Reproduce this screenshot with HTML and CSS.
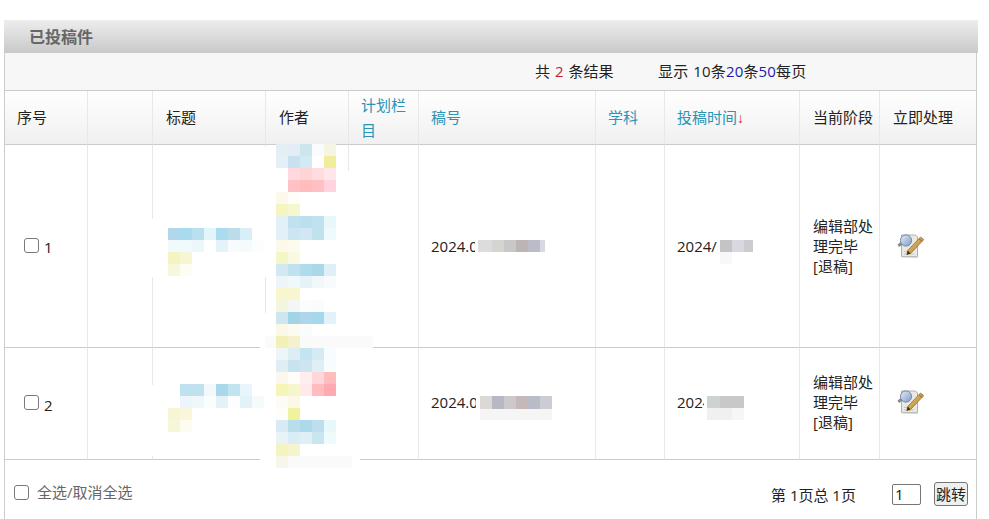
FILE: index.html
```html
<!DOCTYPE html>
<html lang="zh-CN">
<head>
<meta charset="utf-8">
<title>已投稿件</title>
<link rel="stylesheet" href="styles.css">
</head>
<body>
<main class="panel">
  <h2 class="panel-title">已投稿件</h2>
  <div class="panel-body">
    <div class="bar">
      <span class="total">共 <b class="red">2</b> 条结果</span>
      <span class="sizes">显示 10条<a class="size">20</a>条<a class="size">50</a>每页</span>
    </div>
    <table class="grid">
      <colgroup>
        <col class="c1"><col class="c2"><col class="c3"><col class="c4"><col class="c5">
        <col class="c6"><col class="c7"><col class="c8"><col class="c9"><col class="c10">
      </colgroup>
      <thead>
        <tr>
          <th>序号</th><th></th><th>标题</th><th>作者</th>
          <th class="link-col"><a class="sort">计划栏目</a></th>
          <th class="link-col"><a class="sort">稿号</a></th>
          <th class="link-col wide-shift"><a class="sort">学科</a></th>
          <th class="link-col"><a class="sort">投稿时间</a><span class="arrow">↓</span></th>
          <th>当前阶段</th><th>立即处理</th>
        </tr>
      </thead>
      <tbody>
        <tr class="row-a">
          <td class="index"><input type="checkbox" class="check"> <span class="num">1</span></td>
          <td></td><td></td><td></td><td></td>
          <td class="link-col">2024.03</td><td></td><td class="link-col">2024/</td>
          <td>编辑部处理完毕<br>[退稿]</td>
          <td>
            <svg class="act" viewBox="0 0 27 24" width="27" height="24" aria-hidden="true">
              <use href="#act-icon"/>
            </svg>
          </td>
        </tr>
        <tr class="row-b">
          <td class="index"><input type="checkbox" class="check"> <span class="num">2</span></td>
          <td></td><td></td><td></td><td></td>
          <td class="link-col">2024.03</td><td></td><td class="link-col">2024</td>
          <td>编辑部处理完毕<br>[退稿]</td>
          <td>
            <svg class="act" viewBox="0 0 27 24" width="27" height="24" aria-hidden="true">
              <use href="#act-icon"/>
            </svg>
          </td>
        </tr>
      </tbody>
    </table>
    <div class="foot">
      <label class="all"><input type="checkbox" class="check"><span>全选/取消全选</span></label>
      <div class="pager">
        <span class="pages">第 1页总 1页</span>
        <input class="jump" type="text" value="1">
        <button class="go" type="button">跳转</button>
      </div>
    </div>
  </div>
</main>

<svg class="defs" width="0" height="0" aria-hidden="true">
  <defs>
    <linearGradient id="glass" x1="0" y1="0" x2="1" y2="1">
      <stop offset="0" stop-color="#e6eef8"/><stop offset="1" stop-color="#7c9ac4"/>
    </linearGradient>
    <linearGradient id="pencil" x1="0" y1="0" x2="1" y2="1">
      <stop offset="0" stop-color="#f2cc80"/><stop offset="1" stop-color="#a87a28"/>
    </linearGradient>
    <symbol id="act-icon" viewBox="0 0 27 24">
      <path d="M4 23 21 23.6V20H4z" fill="#c4c4c0"/>
      <path d="M4.5 1h14l2 2v19l-1 .8H5.5l-1-.8z" fill="#e8e8e4" stroke="#b0b0ac"/>
      <path d="M7 20h10M7 17.5h6" stroke="#c8c8c4"/>
      <path d="M.5 10.5 4.5 7.5 6.5 10 2 13z" fill="#8a8a8a"/>
      <circle cx="9" cy="6.5" r="5.6" fill="url(#glass)" stroke="#7688a2"/>
      <path d="M23.5 3 26.8 5.6 13.5 19.5 9.8 20.6l1-4.2z" fill="url(#pencil)" stroke="#8a6420" stroke-width=".7"/>
      <path d="M9.8 20.6l1-4.2 2.7 3.1z" fill="#3a2c18"/>
      <path d="M22 4.8l3.2 2.6" stroke="#7d5a1c" stroke-width=".8"/>
    </symbol>
  </defs>
</svg>

<svg class="mask" viewBox="0 0 989 519" width="989" height="519" aria-hidden="true" shape-rendering="crispEdges">
  <g fill="#fff">
    <path d="M266 160 270 147H335L345 160 350 176 360 200V460L345 469H280L255 460H266Z"/>
    <rect x="260" y="147" width="8" height="123"/>
    <rect x="260" y="313" width="8" height="147"/>
    <rect x="146" y="219" width="120" height="58"/>
    <rect x="146" y="385" width="120" height="71"/>
    <rect x="475" y="238" width="71" height="16"/>
    <rect x="476" y="392" width="76" height="28"/>
    <rect x="704" y="392" width="40" height="28"/>
  </g>
  <rect x="265" y="336" width="108" height="12" fill="#fafafa"/>
  <rect x="276" y="456" width="76" height="12" fill="#fafafa"/>

  <!-- author, row 1 -->
  <g>
    <rect x="276" y="144" width="12" height="12" fill="#e3eef5"/><rect x="288" y="144" width="12" height="12" fill="#e3edf5"/><rect x="300" y="144" width="12" height="12" fill="#cbe6ef"/><rect x="312" y="144" width="12" height="12" fill="#fafbfc"/><rect x="324" y="144" width="12" height="12" fill="#f5f5e6"/>
    <rect x="276" y="156" width="12" height="12" fill="#e3f0f6"/><rect x="288" y="156" width="12" height="12" fill="#c8e1f0"/><rect x="300" y="156" width="12" height="12" fill="#d2eaf3"/><rect x="324" y="156" width="12" height="12" fill="#f0ee9c"/>
    <rect x="288" y="168" width="12" height="12" fill="#ffd9dd"/><rect x="300" y="168" width="12" height="12" fill="#ffd4d4"/><rect x="312" y="168" width="12" height="12" fill="#ffdcdf"/><rect x="324" y="168" width="12" height="12" fill="#ffe6ea"/>
    <rect x="288" y="180" width="12" height="12" fill="#ffc0c6"/><rect x="300" y="180" width="12" height="12" fill="#ffbcbe"/><rect x="312" y="180" width="12" height="12" fill="#ffc0c4"/><rect x="324" y="180" width="12" height="12" fill="#ffd4de"/>
    <rect x="276" y="192" width="12" height="12" fill="#fbf8ee"/><rect x="288" y="192" width="12" height="12" fill="#fffdf8"/>
    <rect x="276" y="204" width="12" height="12" fill="#f5f5bf"/><rect x="288" y="204" width="12" height="12" fill="#f7f7cf"/>
    <rect x="276" y="216" width="12" height="12" fill="#e2f0f7"/><rect x="288" y="216" width="12" height="12" fill="#c0e2f0"/><rect x="300" y="216" width="12" height="12" fill="#badfee"/><rect x="312" y="216" width="12" height="12" fill="#c0e2ee"/><rect x="324" y="216" width="12" height="12" fill="#e8f7fa"/>
    <rect x="276" y="228" width="12" height="12" fill="#e3f0f7"/><rect x="288" y="228" width="12" height="12" fill="#cce5f2"/><rect x="300" y="228" width="12" height="12" fill="#d2e7f4"/><rect x="312" y="228" width="12" height="12" fill="#c0e2ee"/><rect x="324" y="228" width="12" height="12" fill="#eefafd"/>
    <rect x="276" y="240" width="12" height="12" fill="#fbf9e8"/><rect x="288" y="240" width="12" height="12" fill="#fcfbee"/>
    <rect x="276" y="252" width="12" height="12" fill="#f5f6c8"/><rect x="288" y="252" width="12" height="12" fill="#f8f9e0"/>
    <rect x="276" y="264" width="12" height="12" fill="#d3e8f2"/><rect x="288" y="264" width="12" height="12" fill="#c0e2ee"/><rect x="300" y="264" width="12" height="12" fill="#aedcec"/><rect x="312" y="264" width="12" height="12" fill="#aad8e8"/><rect x="324" y="264" width="12" height="12" fill="#dfeff7"/>
    <rect x="276" y="276" width="12" height="12" fill="#edf5f9"/><rect x="288" y="276" width="12" height="12" fill="#eff8fb"/><rect x="300" y="276" width="12" height="12" fill="#e5f2f8"/><rect x="312" y="276" width="12" height="12" fill="#f2f8fa"/><rect x="324" y="276" width="12" height="12" fill="#f7fbfd"/>
    <rect x="276" y="288" width="12" height="12" fill="#f7f6cd"/><rect x="288" y="288" width="12" height="12" fill="#f8f6cf"/>
    <rect x="276" y="300" width="12" height="12" fill="#f4f5de"/><rect x="288" y="300" width="12" height="12" fill="#f3f6f3"/><rect x="300" y="300" width="12" height="12" fill="#fbfcfd"/><rect x="312" y="300" width="12" height="12" fill="#f9fbfd"/>
    <rect x="276" y="312" width="12" height="12" fill="#cfe6f1"/><rect x="288" y="312" width="12" height="12" fill="#a0d4e6"/><rect x="300" y="312" width="12" height="12" fill="#aed6ea"/><rect x="312" y="312" width="12" height="12" fill="#a4d8ea"/><rect x="324" y="312" width="12" height="12" fill="#e3f2fa"/>
    <rect x="276" y="324" width="12" height="12" fill="#fbf8e8"/><rect x="288" y="324" width="12" height="12" fill="#fcfbef"/><rect x="300" y="324" width="12" height="12" fill="#fafbfd"/>
    <rect x="276" y="336" width="12" height="12" fill="#f2f0b8"/><rect x="288" y="336" width="12" height="12" fill="#f4f1cc"/>
  </g>
  <!-- author, row 2 -->
  <g>
    <rect x="276" y="348" width="12" height="12" fill="#edf5f9"/><rect x="288" y="348" width="12" height="12" fill="#ddedf4"/><rect x="300" y="348" width="12" height="12" fill="#c3e4f0"/><rect x="312" y="348" width="12" height="12" fill="#d5ebf3"/><rect x="324" y="348" width="12" height="12" fill="#f7fcfe"/>
    <rect x="276" y="360" width="12" height="12" fill="#dfeef5"/><rect x="288" y="360" width="12" height="12" fill="#c8e3ef"/><rect x="300" y="360" width="12" height="12" fill="#cde5f0"/><rect x="312" y="360" width="12" height="12" fill="#e0eef5"/><rect x="324" y="360" width="12" height="12" fill="#f7fcfe"/>
    <rect x="276" y="372" width="12" height="12" fill="#fbf7ee"/><rect x="288" y="372" width="12" height="12" fill="#fffdf9"/><rect x="300" y="372" width="12" height="12" fill="#ffeeee"/><rect x="312" y="372" width="12" height="12" fill="#ffd6dc"/><rect x="324" y="372" width="12" height="12" fill="#ffbcbc"/>
    <rect x="276" y="384" width="12" height="12" fill="#f5f5b8"/><rect x="288" y="384" width="12" height="12" fill="#f6f6cc"/><rect x="300" y="384" width="12" height="12" fill="#ffe9e9"/><rect x="312" y="384" width="12" height="12" fill="#ffbcc0"/><rect x="324" y="384" width="12" height="12" fill="#ffaab0"/>
    <rect x="276" y="396" width="12" height="12" fill="#fdfbf7"/><rect x="288" y="396" width="12" height="12" fill="#fbf8e8"/>
    <rect x="276" y="408" width="12" height="12" fill="#fefdf8"/><rect x="288" y="408" width="12" height="12" fill="#f1f1a0"/>
    <rect x="276" y="420" width="12" height="12" fill="#d8ebf4"/><rect x="288" y="420" width="12" height="12" fill="#b8deec"/><rect x="300" y="420" width="12" height="12" fill="#acdaea"/><rect x="312" y="420" width="12" height="12" fill="#bcdeee"/><rect x="324" y="420" width="12" height="12" fill="#e8f7fa"/>
    <rect x="276" y="432" width="12" height="12" fill="#e8f3f8"/><rect x="288" y="432" width="12" height="12" fill="#d8edf5"/><rect x="300" y="432" width="12" height="12" fill="#e0eef6"/><rect x="312" y="432" width="12" height="12" fill="#c8e6f0"/><rect x="324" y="432" width="12" height="12" fill="#effafc"/>
    <rect x="276" y="444" width="12" height="12" fill="#f4f4c0"/><rect x="288" y="444" width="12" height="12" fill="#f5f4cc"/>
    <rect x="276" y="456" width="12" height="12" fill="#f6f6ea"/>
  </g>
  <!-- title, row 1 -->
  <g>
    <rect x="168" y="228" width="12" height="12" fill="#b0d8ea"/><rect x="180" y="228" width="12" height="12" fill="#a8dbee"/><rect x="192" y="228" width="12" height="12" fill="#badfee"/><rect x="204" y="228" width="12" height="12" fill="#e3f4fb"/><rect x="216" y="228" width="12" height="12" fill="#a8dcee"/><rect x="228" y="228" width="12" height="12" fill="#bcdce9"/><rect x="240" y="228" width="12" height="12" fill="#d8eff7"/>
    <rect x="168" y="240" width="12" height="12" fill="#f0f9fc"/><rect x="180" y="240" width="12" height="12" fill="#f0f9fc"/><rect x="192" y="240" width="12" height="12" fill="#ecf6fb"/><rect x="216" y="240" width="12" height="12" fill="#e4f2f9"/><rect x="228" y="240" width="12" height="12" fill="#f8fbfe"/><rect x="240" y="240" width="12" height="12" fill="#f5fafd"/><rect x="252" y="240" width="12" height="12" fill="#fbfdfe"/>
    <rect x="168" y="252" width="12" height="12" fill="#f5f4c0"/><rect x="180" y="252" width="12" height="12" fill="#f6f6d4"/>
    <rect x="168" y="264" width="12" height="12" fill="#f7f7dc"/><rect x="180" y="264" width="12" height="12" fill="#fdfdf2"/>
  </g>
  <!-- title, row 2 -->
  <g>
    <rect x="180" y="384" width="12" height="12" fill="#c0e2ee"/><rect x="192" y="384" width="12" height="12" fill="#c0e2ee"/><rect x="204" y="384" width="12" height="12" fill="#f2f8fb"/><rect x="216" y="384" width="12" height="12" fill="#a8d8ea"/><rect x="228" y="384" width="12" height="12" fill="#c0e4f0"/><rect x="240" y="384" width="12" height="12" fill="#eaf5fb"/>
    <rect x="180" y="396" width="12" height="12" fill="#ebf5fb"/><rect x="192" y="396" width="12" height="12" fill="#eef7fa"/><rect x="204" y="396" width="12" height="12" fill="#fafdfe"/><rect x="216" y="396" width="12" height="12" fill="#e3f2f7"/><rect x="228" y="396" width="12" height="12" fill="#fbfdfe"/><rect x="240" y="396" width="12" height="12" fill="#e3f2f8"/><rect x="252" y="396" width="12" height="12" fill="#f5fbfd"/>
    <rect x="168" y="408" width="12" height="12" fill="#f7f6d4"/><rect x="180" y="408" width="12" height="12" fill="#f8f7da"/>
    <rect x="168" y="420" width="12" height="12" fill="#f6f6d8"/><rect x="180" y="420" width="12" height="12" fill="#fcfdf0"/>
  </g>
  <!-- manuscript number -->
  <g>
    <rect x="478" y="240" width="14" height="12" fill="#dcdcdc"/><rect x="492" y="240" width="12" height="12" fill="#d4d4d0"/><rect x="504" y="240" width="12" height="12" fill="#c8c8c8"/><rect x="516" y="240" width="12" height="12" fill="#bdb5b5"/><rect x="528" y="240" width="12" height="12" fill="#bcbcc8"/><rect x="540" y="240" width="5" height="12" fill="#d8d8e0"/>
    <rect x="480" y="396" width="12" height="13" fill="#dcd8d8"/><rect x="492" y="396" width="12" height="13" fill="#b8b8c4"/><rect x="504" y="396" width="12" height="13" fill="#ccc8cc"/><rect x="516" y="396" width="12" height="13" fill="#c4b8b8"/><rect x="528" y="396" width="12" height="13" fill="#b8bcc8"/><rect x="540" y="396" width="12" height="13" fill="#ccccd4"/>
    <rect x="480" y="409" width="72" height="11" fill="#f5f5f5"/>
  </g>
  <!-- submit time -->
  <g>
    <rect x="720" y="240" width="12" height="12" fill="#c4c4c4"/><rect x="732" y="240" width="12" height="12" fill="#d8d8e0"/><rect x="744" y="240" width="9" height="12" fill="#ccccd0"/><rect x="720" y="252" width="12" height="12" fill="#f8f8f8"/>
    <rect x="707" y="396" width="13" height="12" fill="#cdd2d2"/><rect x="720" y="396" width="12" height="12" fill="#c8c8c8"/><rect x="732" y="396" width="12" height="12" fill="#c8c8c8"/>
    <rect x="707" y="408" width="25" height="12" fill="#f0f0f0"/><rect x="732" y="408" width="12" height="12" fill="#f6f6f6"/>
  </g>
</svg>
</body>
</html>
```
FILE: styles.css
```css
* { box-sizing: border-box; }

html, body {
  margin: 0;
  background: #fff;
}

body {
  position: relative;
  height: 519px;
  overflow: hidden;
  font-family: "Open Sans", "Noto Sans CJK SC", sans-serif;
  font-size: 15px;
  line-height: 20px;
  color: #222;
}

.panel {
  width: 974px;
  margin: 20px 0 0 4px;
}

.panel-title {
  height: 33px;
  margin: 0;
  padding-left: 25px;
  background: linear-gradient(#ededed, #c9c9c9);
  font-size: 16px;
  font-weight: 700;
  line-height: 35px;
  color: #666;
}

.panel-body {
  width: 973px;
  border-left: 1px solid #ccc;
  border-right: 1px solid #ccc;
}

.bar {
  display: flex;
  height: 38px;
  padding: 0 0 2px 530px;
  align-items: center;
  background: #f7f7f7;
  border-bottom: 1px solid #ccc;
}

.total { width: 123px; word-spacing: 1px; }
.sizes { letter-spacing: .15px; word-spacing: 1px; }
.red { font-weight: 400; color: #c81e1e; }
.size { color: #1a1ab4; }

.grid {
  width: 971px;
  table-layout: fixed;
  border-collapse: separate;
  border-spacing: 0;
}

.c1 { width: 83px; }
.c2 { width: 65px; }
.c3 { width: 113px; }
.c4 { width: 83px; }
.c5 { width: 70px; }
.c6 { width: 177px; }
.c7 { width: 69px; }
.c8 { width: 135px; }
.c9 { width: 80px; }
.c10 { width: 96px; }

.grid th,
.grid td {
  padding: 0 5px 0 13px;
  border-right: 1px solid #e8e8e8;
  border-bottom: 1px solid #ccc;
  text-align: left;
  vertical-align: middle;
  font-weight: 400;
}

.grid th:last-child,
.grid td:last-child { border-right: 0; }

.grid th:first-child { padding-left: 12px; }

.grid th.link-col,
.grid td.link-col { padding-left: 12px; }

.grid th.wide-shift { padding-left: 12px; }

.grid thead tr { height: 54px; }
.grid th {
  background: linear-gradient(#fff, #f0f0f0);
  line-height: 25px;
  color: #222;
}

.row-a { height: 203px; }
.row-b { height: 112px; }
.grid .row-b td { padding-bottom: 3px; }

.sort { color: #2b93b5; }
.arrow { font-family: "Liberation Sans", sans-serif; font-size: 14px; color: #e62828; }

.grid .row-a td.index,
.grid .row-b td.index { padding: 0 0 0 19px; }

.check {
  appearance: none;
  width: 15px;
  height: 15px;
  margin: 0;
  background: #fff;
  border: 1.5px solid #7a7a7a;
  border-radius: 3px;
  vertical-align: middle;
}

.index .check { position: relative; top: -2px; }
.row-b .index .check { top: -3px; }
.num { position: relative; top: 1px; margin-left: 1px; }

.act { display: block; margin-left: 4px; }

.foot {
  display: flex;
  height: 59px;
  padding: 0 8px 0 9px;
  align-items: flex-start;
  justify-content: space-between;
}

.all {
  display: flex;
  align-items: center;
  gap: 8px;
  margin-top: 22px;
  color: #666;
}

.pager {
  display: flex;
  align-items: center;
  margin-top: 22px;
}

.pages { width: 121px; padding-top: 1px; }

.jump {
  width: 29px;
  height: 21px;
  margin-right: 13px;
  padding: 0 2px;
  border: 1px solid #767676;
  border-radius: 2px;
  font: inherit;
  color: #111;
}

.go {
  width: 34px;
  height: 24px;
  padding: 0;
  background: #efefef;
  border: 1px solid #767676;
  border-radius: 3px;
  font: inherit;
  color: #222;
}

.defs { position: absolute; }

.mask {
  position: absolute;
  top: 0;
  left: 0;
  pointer-events: none;
}
```
